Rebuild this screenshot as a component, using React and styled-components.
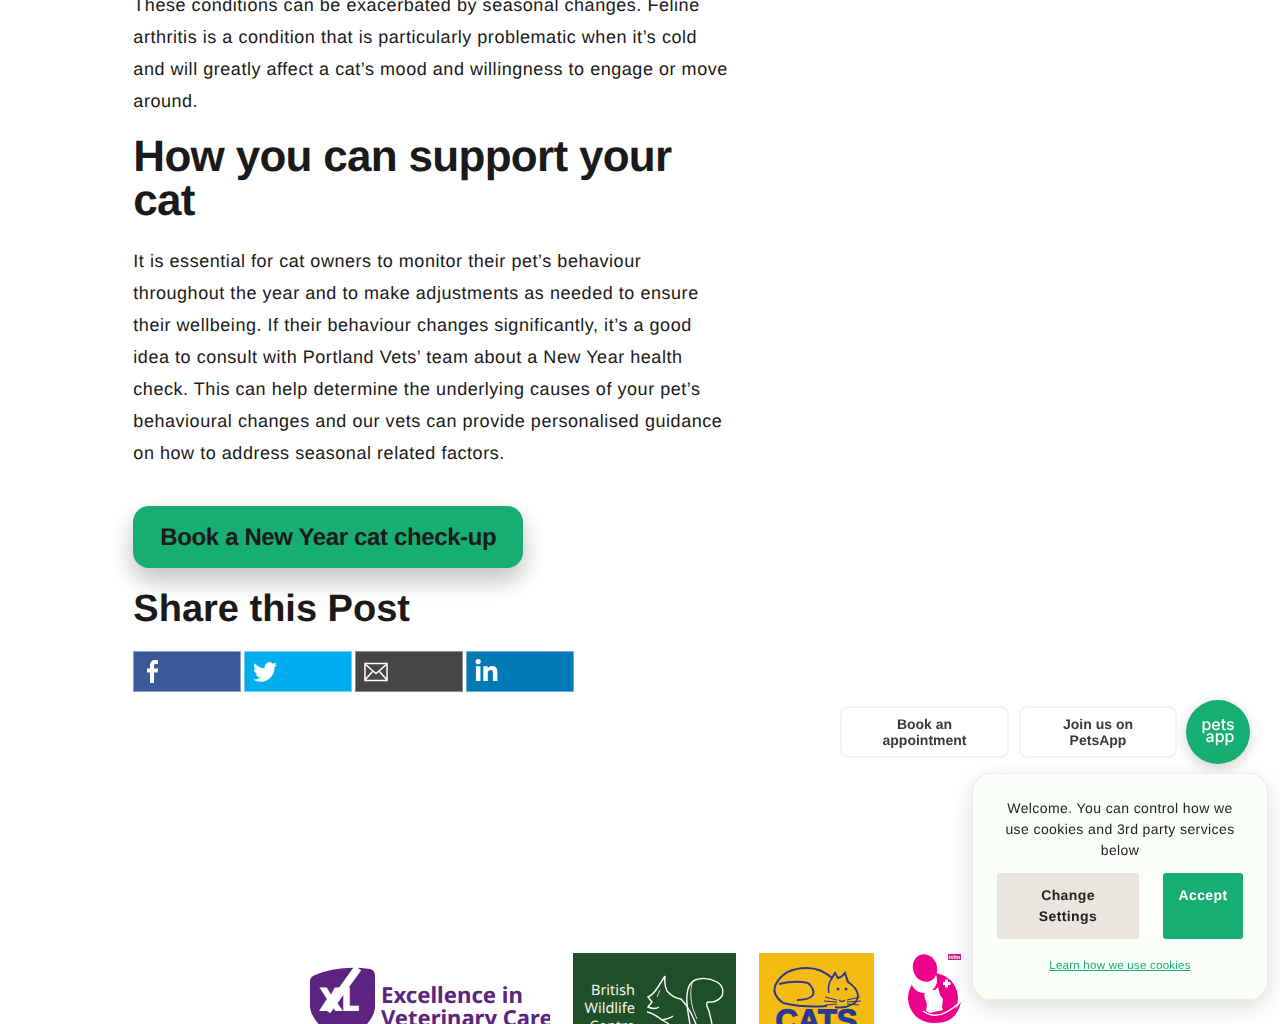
import React from "react";
import styled, { createGlobalStyle } from "styled-components";
import { FaTwitter, FaLinkedinIn } from "react-icons/fa";

const GlobalStyle = createGlobalStyle`
  html, body {
    margin: 0;
    padding: 0;
    height: 1024px;
    overflow: hidden;
    background: #fff;
    font-family: "Liberation Sans", Arial, sans-serif;
    color: #1a1a1a;
    text-rendering: geometricPrecision;
  }
`;

const Page = styled.div`
  height: 1024px;
  overflow: hidden;
`;
const Article = styled.main`
  width: 597px;
  margin: -11px 0 0 133.33px;
`;
const Text = styled.p`
  margin: 0;
  font-size: 18px;
  line-height: 32px;
  letter-spacing: 0.54px;
`;
const Heading = styled.h2`
  margin: 18px 0 22px;
  font-size: 44px;
  line-height: 44px;
  letter-spacing: -0.7px;
  font-weight: 700;
`;
const BookButton = styled.a`
  display: inline-block;
  box-sizing: border-box;
  width: 390px;
  margin-top: 37px;
  height: 62px;
  line-height: 63px;
  border-radius: 16px;
  background: #16ae72;
  color: #1a1a1a;
  font-size: 24px;
  letter-spacing: -0.37px;
  font-weight: 700;
  text-align: center;
  box-shadow: 0 12px 24px rgba(0, 0, 0, 0.25);
`;
const ShareTitle = styled.h3`
  margin: 19px 0 20px;
  font-size: 38px;
  line-height: 44px;
  font-weight: 700;
`;
const ShareRow = styled.div`
  display: flex;
  gap: 3px;
`;
const ShareLink = styled.a`
  box-sizing: border-box;
  display: flex;
  align-items: center;
  width: 108px;
  height: 41px;
  padding-left: ${(p) => p.$pad}px;
  background: ${(p) => p.$bg};
  border: 1px solid ${(p) => p.$line};
  color: #fff;
  font-size: ${(p) => p.$size}px;
`;
const LogoRow = styled.div`
  display: flex;
  justify-content: center;
  align-items: flex-start;
  gap: 23px;
  margin-top: 261px;
`;
const LogoSvg = styled.svg`
  display: block;
  flex: none;
`;
const Widgets = styled.div`
  position: fixed;
  right: 30px;
  top: 700px;
  display: flex;
  align-items: center;
  gap: 10px;
`;
const WidgetButton = styled.a`
  box-sizing: border-box;
  display: flex;
  align-items: center;
  justify-content: center;
  width: ${(p) => p.$w}px;
  height: 52px;
  background: #fff;
  border: 2px solid #f3f3f9;
  border-radius: 8px;
  color: #3a3a3c;
  font-size: 14px;
  line-height: 16px;
  font-weight: 700;
  text-align: center;
`;
const PetsBadge = styled.a`
  box-sizing: border-box;
  display: flex;
  flex-direction: column;
  align-items: center;
  justify-content: center;
  width: 64px;
  height: 64px;
  margin-left: -1px;
  padding-bottom: 4px;
  border-radius: 50%;
  background: #16ae72;
  color: #fff;
  font-family: Inter, sans-serif;
  font-size: 16px;
  line-height: 12px;
  font-weight: 500;
  box-shadow: 0 4px 14px rgba(0, 0, 0, 0.18);
`;
const BadgeWord = styled.span`
  transform: translateX(${(p) => p.$x}px);
`;
const CookiePanel = styled.aside`
  box-sizing: border-box;
  position: fixed;
  left: 973px;
  top: 774px;
  width: 294px;
  height: 225px;
  padding: 24px 24px 0;
  background: #fbfff9;
  border-radius: 18px;
  box-shadow: 0 0 0 1px #f0ebe4, 0 8px 28px rgba(0, 0, 0, 0.14);
  text-align: center;
`;
const CookieText = styled.p`
  margin: 0 0 12px;
  font-size: 14px;
  line-height: 21px;
  letter-spacing: 0.4px;
  color: #222;
`;
const CookieActions = styled.div`
  display: flex;
  justify-content: space-between;
`;
const CookieButton = styled.a`
  box-sizing: border-box;
  display: block;
  width: ${(p) => p.$w}px;
  height: 66px;
  padding: 12px ${(p) => p.$pad}px 0;
  border-radius: 3px;
  background: ${(p) => p.$bg};
  color: ${(p) => p.$fg};
  font-size: 14px;
  line-height: 21px;
  font-weight: 700;
  letter-spacing: 0.4px;
  text-align: center;
`;
const CookieLink = styled.a`
  display: block;
  margin-top: 19px;
  font-size: 11.5px;
  line-height: 16px;
  letter-spacing: 0.25px;
  color: #16ae72;
  text-decoration: underline;
`;

const FacebookIcon = () => (
  <svg width="11" height="23" viewBox="0 0 11 23" fill="#fff">
    <path d="M3 23V12.5H0V8.5h3V5.5C3 2 5 0 8 0h3v4H9C7.7 4 7 4.6 7 6v2.5h4l-.5 4H7V23z" />
  </svg>
);

const MailIcon = () => (
  <svg width="24" height="20" viewBox="0 0 24 20" fill="none" stroke="#fff" strokeWidth="1.5">
    <rect x="1" y="1.5" width="22" height="17" />
    <path d="M1 2l11 9.5L23 2M1 18l8-9M23 18l-8-9" />
  </svg>
);

const XlLogo = () => (
  <LogoSvg width="240" height="71" viewBox="0 0 240 71">
    <path d="M0 28Q0 24 5 22Q30 12 60 16Q65 17 65 23V55Q63 72 33 90Q3 72 0 55Z" fill="#5a2480" />
    <path d="M48 15L17 58" stroke="#fff" strokeWidth="8" fill="none" />
    <text x="9" y="58" fill="#fff" fontFamily="'Open Sans', sans-serif" fontWeight="800" fontSize="33" letterSpacing="-2">XL</text>
    <text x="71" y="50" fill="#5a2480" fontFamily="'Noto Sans', sans-serif" fontWeight="700" fontSize="22.2">Excellence in</text>
    <text x="71" y="73" fill="#5a2480" fontFamily="'Noto Sans', sans-serif" fontWeight="700" fontSize="22">Veterinary Care</text>
  </LogoSvg>
);

const WildlifeLogo = () => (
  <LogoSvg width="163" height="71" viewBox="0 0 163 71">
    <rect width="163" height="71" fill="#1f4f28" />
    <g fill="#f4f6f0" fontFamily="'Noto Sans', sans-serif" fontSize="14.5" textAnchor="end">
      <text x="62" y="42">British</text>
      <text x="62" y="60">Wildlife</text>
      <text x="62" y="78">Centre</text>
    </g>
    <g fill="none" stroke="#fff" strokeWidth="1.4">
      <path d="M92 23L85 34Q80 42 75 44L79 49L75 54Q82 57 86 54M92 23Q91 32 94 38Q100 45 108 46Q114 52 118 60L123 71" />
      <path d="M74 59Q80 60 89 67Q96 66 100 63M89 67L96 71" />
      <path d="M117 71Q113 50 114 42Q115 30 122 27Q133 23 144 29Q152 34 149 43Q144 50 135 49Q132 50 136 58L139 71" />
      <path d="M119 30Q116 42 120 56L124 66" strokeWidth="0.8" />
    </g>
    <path d="M87 37L84 44" stroke="#fff" strokeWidth="0.8" />
  </LogoSvg>
);

const CatsLogo = () => (
  <LogoSvg width="115" height="71" viewBox="0 0 115 71">
    <rect width="115" height="71" fill="#f4bb12" />
    <g fill="none" stroke="#2b3990" strokeWidth="2">
      <path d="M24 50Q13 42 16 33Q24 15 48 15Q62 15 73 25L76 20L79 25Q83 24 86 20L89 29Q98 35 99 42Q98 50 94 51Q85 56 76 54" />
      <path d="M24 50Q45 55 68 53" />
      <path d="M20 31Q36 27 49 30Q56 36 54 42Q50 47 38 47" />
      <path d="M73 25Q68 32 70 40" strokeWidth="1.6" />
      <path d="M66 44L78 47M65 48L78 49M66 52L78 51M88 47L101 44M88 49L102 48M88 51L100 52" strokeWidth="1.2" />
      <path d="M80 47Q83 50 86 47" strokeWidth="1.2" />
    </g>
    <circle cx="79" cy="36" r="1.5" fill="#2b3990" />
    <circle cx="87" cy="36" r="1.5" fill="#2b3990" />
    <text x="57.5" y="78" textAnchor="middle" fill="#2b3990" stroke="#2b3990" strokeWidth="1.2" fontFamily="'Liberation Sans', sans-serif" fontWeight="700" fontSize="31">CATS</text>
  </LogoSvg>
);

const IsfmLogo = () => (
  <LogoSvg width="73" height="71" viewBox="0 0 73 71">
    <circle cx="36" cy="45" r="25" fill="#ec008c" />
    <circle cx="27" cy="27" r="13" fill="#fff" />
    <ellipse cx="28" cy="15" rx="12" ry="14" transform="rotate(-18 28 15)" fill="#ec008c" />
    <path d="M31 33L34 37L38 37L41 34L43 42L46 46L45 54L46 57L33 60L29 58Q31 50 28 46Q26 40 31 33Z" fill="#fff" />
    <path d="M46 29h2v-2.5h3V29h2.5v3H51v2.500h-3V32h-2z" fill="#fff" />
    <path d="M26 58Q42 70 64 48" fill="none" stroke="#fff" strokeWidth="1.5" />
    <path d="M28 66Q48 72 64 49Q58 74 32 69Z" fill="#ec008c" />
    <rect x="51" y="1" width="13" height="6" fill="#c51d8c" />
    <text x="57.5" y="6" textAnchor="middle" fill="#fff" fontFamily="'Liberation Sans', sans-serif" fontWeight="700" fontSize="5.5">isfm</text>
  </LogoSvg>
);

const shares = [
  { name: "facebook", bg: "#3b5998", line: "#8a9fc6", pad: 13, size: 24, icon: <FacebookIcon /> },
  { name: "twitter", bg: "#00aeef", line: "#6fd2f5", pad: 8, size: 24, icon: <FaTwitter /> },
  { name: "email", bg: "#464646", line: "#8f8f8f", pad: 8, size: 24, icon: <MailIcon /> },
  { name: "linkedin", bg: "#0079b5", line: "#69b2d6", pad: 7, size: 25, icon: <FaLinkedinIn /> },
];

export default function App() {
  return (
    <Page>
      <GlobalStyle />
      <Article>
        <Text>
          These conditions can be exacerbated by seasonal changes. Feline arthritis is a condition that is
          particularly problematic when it’s cold and will greatly affect a cat’s mood and willingness to engage or
          move around.
        </Text>
        <Heading>How you can support your cat</Heading>
        <Text>
          It is essential for cat owners to monitor their pet’s behaviour throughout the year and to make adjustments
          as needed to ensure their wellbeing. If their behaviour changes significantly, it’s a good idea to consult
          with Portland Vets’ team about a New Year health check. This can help determine the underlying causes of
          your pet’s behavioural changes and our vets can provide personalised guidance on how to address seasonal
          related factors.
        </Text>
        <BookButton>Book a New Year cat check-up</BookButton>
        <ShareTitle>Share this Post</ShareTitle>
        <ShareRow>
          {shares.map((s) => (
            <ShareLink key={s.name} $bg={s.bg} $line={s.line} $pad={s.pad} $size={s.size} aria-label={s.name}>
              {s.icon}
            </ShareLink>
          ))}
        </ShareRow>
      </Article>
      <LogoRow>
        <XlLogo />
        <WildlifeLogo />
        <CatsLogo />
        <IsfmLogo />
      </LogoRow>
      <Widgets>
        <WidgetButton $w={169}>
          Book an
          <br />
          appointment
        </WidgetButton>
        <WidgetButton $w={158}>
          Join us on
          <br />
          PetsApp
        </WidgetButton>
        <PetsBadge>
          <BadgeWord $x={0}>pets</BadgeWord>
          <BadgeWord $x={2}>app</BadgeWord>
        </PetsBadge>
      </Widgets>
      <CookiePanel>
        <CookieText>Welcome. You can control how we use cookies and 3rd party services below</CookieText>
        <CookieActions>
          <CookieButton $w={142} $pad={20} $bg="#eae5df" $fg="#222">
            Change Settings
          </CookieButton>
          <CookieButton $w={80} $pad={8} $bg="#16ae72" $fg="#fff">
            Accept
          </CookieButton>
        </CookieActions>
        <CookieLink>Learn how we use cookies</CookieLink>
      </CookiePanel>
    </Page>
  );
}
